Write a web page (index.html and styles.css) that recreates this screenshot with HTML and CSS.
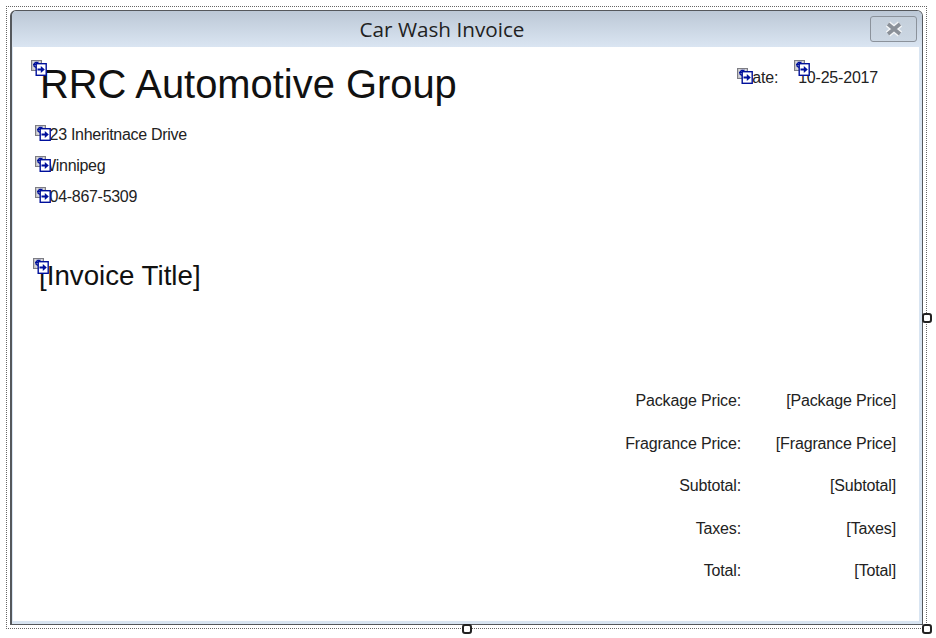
FILE: index.html
```html
<!DOCTYPE html>
<html lang="en">
<head>
    <meta charset="UTF-8">
    <meta name="viewport" content="width=device-width, initial-scale=1.0">
    <title>Car Wash Invoice</title>
    <link rel="stylesheet" href="styles.css">
</head>
<body>
    <svg class="defs" width="0" height="0">
        <symbol id="link" viewBox="0 0 16 16">
            <rect x="0.5" y="0.5" width="10" height="10" fill="#c4c4c8" stroke="#7d7d84"/>
            <path d="M2 2h1M4 2h1M6 2h1M8 2h1M3 3h1M5 3h1M7 3h1M2 4h1M2 8h1M3 9h1" stroke="#ececec" fill="none"/>
            <path d="M7.5 2.5H4.5L3 4v2l2 1.5" stroke="#00109c" stroke-width="1.3" fill="none"/>
            <path d="M2 4.5h3.5" stroke="#00109c" fill="none"/>
            <rect x="5.2" y="3.7" width="10" height="11.6" fill="#ffffff" stroke="#00109c" stroke-width="1.4"/>
            <path d="M6.5 8.6h3.3V6l4 3.5-4 3.5v-2.6H6.5z" fill="#00109c"/>
        </symbol>
    </svg>
    <div class="surface">
        <div class="window">
            <div class="titlebar">
                <span class="window-title">Car Wash Invoice</span>
                <button class="close" type="button">
                    <svg width="20" height="16" viewBox="0 0 20 16">
                        <path d="M4 3l12 10M16 3L4 13" stroke="#f4f6f8" stroke-width="6.5" fill="none"/>
                        <path d="M4 3l12 10M16 3L4 13" stroke="#8a9098" stroke-width="3.6" fill="none"/>
                    </svg>
                </button>
            </div>
            <div class="content">
                <div class="top">
                    <div class="company">
                        <h1 class="field">
                            <svg class="link link-big"><use href="#link"/></svg>RRC Automotive Group
                        </h1>
                        <p class="field address">
                            <svg class="link"><use href="#link"/></svg>123 Inheritnace Drive
                        </p>
                        <p class="field address">
                            <svg class="link"><use href="#link"/></svg>Winnipeg
                        </p>
                        <p class="field address">
                            <svg class="link"><use href="#link"/></svg>204-867-5309
                        </p>
                    </div>
                    <div class="date">
                        <span class="field date-label">
                            <svg class="link"><use href="#link"/></svg>Date:
                        </span>
                        <span class="field date-value">
                            <svg class="link link-date"><use href="#link"/></svg>10-25-2017
                        </span>
                    </div>
                </div>
                <h2 class="field invoice-title">
                    <svg class="link link-invoice"><use href="#link"/></svg>[Invoice Title]
                </h2>
                <div class="totals">
                    <span>Package Price:</span><span>[Package Price]</span>
                    <span>Fragrance Price:</span><span>[Fragrance Price]</span>
                    <span>Subtotal:</span><span>[Subtotal]</span>
                    <span>Taxes:</span><span>[Taxes]</span>
                    <span>Total:</span><span>[Total]</span>
                </div>
            </div>
        </div>
        <i class="handle handle-right"></i>
        <i class="handle handle-bottom"></i>
        <i class="handle handle-corner"></i>
    </div>
</body>
</html>
```

FILE: styles.css
```css
* {
    box-sizing: border-box;
}
body {
    margin: 0;
    min-height: 100vh;
    display: flow-root;
    background-color: #ffffff;
    font-family: "Liberation Sans", Arial, sans-serif;
    color: #222222;
}
.defs {
    position: absolute;
}
.surface {
    position: relative;
    width: 921px;
    height: 623px;
    margin: 6px 0 0 6px;
    padding: 3px;
    border: 1px dotted #666666;
}
.window {
    height: 100%;
    display: flex;
    flex-direction: column;
    padding: 0 3px 3px 1px;
    background-color: #d9e5f2;
    border: 1px solid #55585c;
    border-left-width: 2px;
    border-radius: 6px 6px 0 0;
}
.titlebar {
    position: relative;
    flex: 0 0 36px;
    display: flex;
    align-items: center;
    justify-content: center;
    margin: 0 -3px 0 -1px;
    padding-right: 50px;
    background: linear-gradient(#bcc8d6, #dae5f2);
    border-radius: 5px 5px 0 0;
}
.window-title {
    font-family: "Open Sans", sans-serif;
    font-size: 20.7px;
    color: #222222;
}
.close {
    position: absolute;
    top: 5px;
    right: 5px;
    width: 47px;
    height: 26px;
    padding: 0;
    display: flex;
    align-items: center;
    justify-content: center;
    background: linear-gradient(#c4cfdb, #ccd7e3);
    border: 1px solid #8b929b;
    border-radius: 3px;
}
.content {
    flex: 1;
    padding: 14px 23px 0 28px;
    background-color: #ffffff;
}
.top {
    display: flex;
    justify-content: space-between;
}
.field {
    position: relative;
    margin: 0;
    font-weight: normal;
}
.link {
    position: absolute;
    left: -6px;
    top: 0;
    width: 16px;
    height: 16px;
}
.company h1 {
    font-size: 39.9px;
    line-height: 46px;
    margin-bottom: 18px;
    margin-left: -1px;
    color: #111111;
}
.link-big {
    top: -1px;
    left: -9px;
}
.address {
    font-size: 16px;
    height: 31px;
    line-height: 20px;
    letter-spacing: -0.3px;
}
.date {
    display: flex;
    gap: 20px;
    font-size: 16px;
    line-height: 20px;
    margin: 7px 18px 0 0;
    letter-spacing: -0.2px;
}
.date-label .link {
    left: -4px;
    top: 0;
}
.date-value .link-date {
    left: -4px;
    top: -8px;
}
.invoice-title {
    font-size: 27.7px;
    line-height: 32px;
    margin-top: 42px;
    margin-left: -2px;
    color: #111111;
}
.link-invoice {
    left: -6px;
    top: -2px;
}
.totals {
    display: grid;
    grid-template-columns: auto 155px;
    justify-content: end;
    margin-top: 88px;
    font-size: 16px;
    line-height: 42.5px;
    letter-spacing: -0.15px;
    text-align: right;
}
.handle {
    position: absolute;
    width: 10px;
    height: 10px;
    background-color: #ffffff;
    border: 2px solid #222222;
    border-radius: 3px;
}
.handle-right {
    top: 306px;
    right: -6px;
}
.handle-bottom {
    bottom: -6px;
    left: 455px;
}
.handle-corner {
    right: -6px;
    bottom: -6px;
}
```
